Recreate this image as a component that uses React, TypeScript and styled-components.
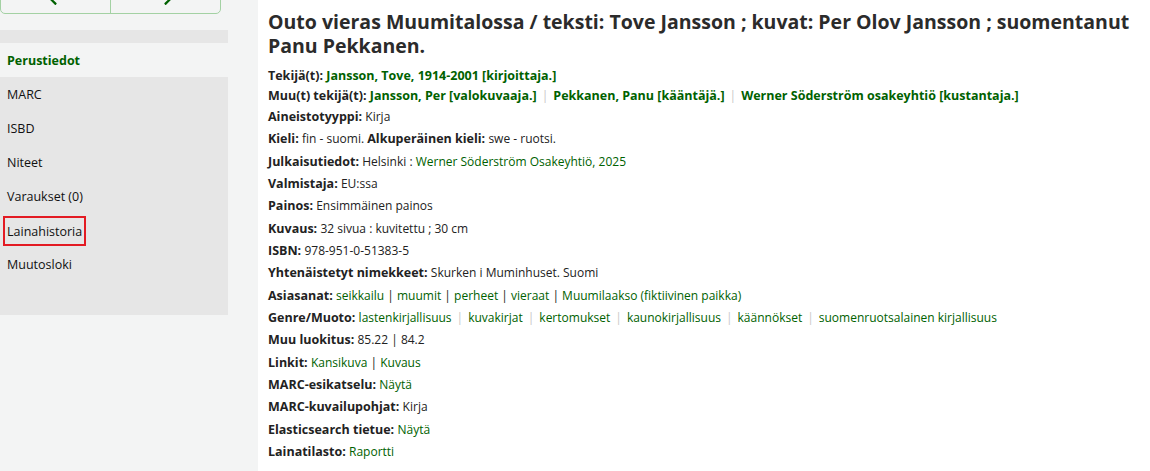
import React from 'react';
import styled, { createGlobalStyle } from 'styled-components';
import { FaArrowLeft, FaArrowRight } from 'react-icons/fa';

const GlobalStyle = createGlobalStyle`
  html, body {
    margin: 0;
    padding: 0;
    background: #f3f4f4;
    font-family: "Open Sans", "Noto Sans", Arial, sans-serif;
    color: #222;
  }
`;

const Page = styled.div`
  display: flex;
  width: 1150px;
  height: 471px;
  overflow: hidden;
`;

const Aside = styled.div`
  width: 258px;
  flex-shrink: 0;
  background: #f3f4f4;
`;

const NavButtons = styled.div`
  display: flex;
  width: 221px;
  height: 30px;
  margin-top: -16px;
  border: 1px solid #a3d1a3;
  border-radius: 5px;
  box-sizing: border-box;
  overflow: hidden;
`;

const NavButton = styled.div<{ first?: boolean }>`
  flex: 1;
  display: flex;
  align-items: flex-end;
  justify-content: center;
  padding-bottom: 7px;
  color: #006100;
  font-size: 15px;
  border-left: ${({ first }) => (first ? 'none' : '1px solid #a3d1a3')};
`;

const Menu = styled.ul`
  list-style: none;
  margin: 16px 0 0;
  padding: 13px 0 0;
  width: 228px;
  background: #e6e6e6;
`;

const MenuItem = styled.li<{ active?: boolean }>`
  height: 34px;
  display: flex;
  align-items: center;
  padding-left: 7px;
  font-size: 12.5px;
  background: ${({ active }) => (active ? '#f3f4f4' : 'transparent')};
  color: ${({ active }) => (active ? '#006100' : '#111')};
  font-weight: ${({ active }) => (active ? 700 : 400)};
`;

const Marked = styled.span`
  outline: 2px solid #e31b23;
  padding: 5px 2px 4px 2px;
  margin-left: -2px;
  margin-top: 2px;
`;

const Main = styled.div`
  flex: 1;
  background: #fff;
  padding: 10px 10px 0 10px;
`;

const Title = styled.h1`
  margin: 0 0 8px;
  font-size: 19.5px;
  line-height: 24px;
  font-weight: 700;
  color: #2b2b2b;
`;

const Row = styled.div<{ tight?: boolean }>`
  font-size: 12px;
  line-height: ${({ tight }) => (tight ? '20px' : '22.33px')};
  color: #222;
`;

const Label = styled.span`
  font-size: 12.5px;
  font-weight: 700;
  color: #222;
`;

const Link = styled.span<{ strong?: boolean }>`
  color: #006100;
  font-size: ${({ strong }) => (strong ? '12.5px' : '12px')};
  font-weight: ${({ strong }) => (strong ? 700 : 400)};
`;

const Sep = styled.span`
  color: #c8c8c8;
  margin: 0 5px;
`;

const menu = ['MARC', 'ISBD', 'Niteet', 'Varaukset (0)', 'Lainahistoria', 'Muutosloki'];

const genres = [
  'lastenkirjallisuus',
  'kuvakirjat',
  'kertomukset',
  'kaunokirjallisuus',
  'käännökset',
  'suomenruotsalainen kirjallisuus',
];

const subjects = ['seikkailu', 'muumit', 'perheet', 'vieraat', 'Muumilaakso (fiktiivinen paikka)'];

const App: React.FC = () => {
  return (
    <>
      <GlobalStyle />
      <Page>
        <Aside>
          <NavButtons>
            <NavButton first>
              <FaArrowLeft />
            </NavButton>
            <NavButton>
              <FaArrowRight />
            </NavButton>
          </NavButtons>
          <Menu>
            <MenuItem active>Perustiedot</MenuItem>
            {menu.map((m) => (
              <MenuItem key={m}>{m === 'Lainahistoria' ? <Marked>{m}</Marked> : m}</MenuItem>
            ))}
            <MenuItem />
          </Menu>
        </Aside>
        <Main>
          <Title>
            Outo vieras Muumitalossa / teksti: Tove Jansson ; kuvat: Per Olov Jansson ; suomentanut Panu
            Pekkanen.
          </Title>
          <Row tight>
            <Label>Tekijä(t): </Label>
            <Link strong>Jansson, Tove, 1914-2001 [kirjoittaja.]</Link>
          </Row>
          <Row tight>
            <Label>Muu(t) tekijä(t): </Label>
            <Link strong>Jansson, Per [valokuvaaja.]</Link>
            <Sep>|</Sep>
            <Link strong>Pekkanen, Panu [kääntäjä.]</Link>
            <Sep>|</Sep>
            <Link strong>Werner Söderström osakeyhtiö [kustantaja.]</Link>
          </Row>
          <Row>
            <Label>Aineistotyyppi: </Label>Kirja
          </Row>
          <Row>
            <Label>Kieli: </Label>fin - suomi. <Label>Alkuperäinen kieli: </Label>swe - ruotsi.
          </Row>
          <Row>
            <Label>Julkaisutiedot: </Label>Helsinki : <Link>Werner Söderström Osakeyhtiö, 2025</Link>
          </Row>
          <Row>
            <Label>Valmistaja: </Label>EU:ssa
          </Row>
          <Row>
            <Label>Painos: </Label>Ensimmäinen painos
          </Row>
          <Row>
            <Label>Kuvaus: </Label>32 sivua : kuvitettu ; 30 cm
          </Row>
          <Row>
            <Label>ISBN: </Label>978-951-0-51383-5
          </Row>
          <Row>
            <Label>Yhtenäistetyt nimekkeet: </Label>Skurken i Muminhuset. Suomi
          </Row>
          <Row>
            <Label>Asiasanat: </Label>
            {subjects.map((s, i) => (
              <React.Fragment key={s}>
                {i > 0 && ' | '}
                <Link>{s}</Link>
              </React.Fragment>
            ))}
          </Row>
          <Row>
            <Label>Genre/Muoto: </Label>
            {genres.map((g, i) => (
              <React.Fragment key={g}>
                {i > 0 && <Sep>|</Sep>}
                <Link>{g}</Link>
              </React.Fragment>
            ))}
          </Row>
          <Row>
            <Label>Muu luokitus: </Label>85.22 | 84.2
          </Row>
          <Row>
            <Label>Linkit: </Label>
            <Link>Kansikuva</Link> | <Link>Kuvaus</Link>
          </Row>
          <Row>
            <Label>MARC-esikatselu: </Label>
            <Link>Näytä</Link>
          </Row>
          <Row>
            <Label>MARC-kuvailupohjat: </Label>Kirja
          </Row>
          <Row>
            <Label>Elasticsearch tietue: </Label>
            <Link>Näytä</Link>
          </Row>
          <Row>
            <Label>Lainatilasto: </Label>
            <Link>Raportti</Link>
          </Row>
        </Main>
      </Page>
    </>
  );
};

export default App;
